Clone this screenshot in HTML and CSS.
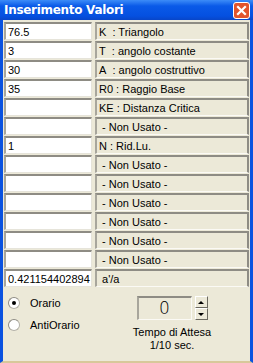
FILE: index.html
```html
<!DOCTYPE html>
<html lang="it">
<head>
  <meta charset="UTF-8" />
  <title>Inserimento Valori</title>
  <link rel="stylesheet" href="styles.css">
</head>
<body>
  <div class="window">
    <div class="titlebar">
      <span class="title">Inserimento Valori</span>
      <span class="close">
        <svg width="11" height="11" viewBox="0 0 11 11">
          <path d="M2 2 L9 9 M9 2 L2 9" stroke="#fff" stroke-width="2.2" stroke-linecap="square" />
        </svg>
      </span>
    </div>

    <div class="client">
      <div class="rows">
        <input class="val" value="76.5"><div class="lbl">K&nbsp; : Triangolo</div>
        <input class="val" value="3"><div class="lbl">T&nbsp; : angolo costante</div>
        <input class="val" value="30"><div class="lbl">A&nbsp; : angolo costruttivo</div>
        <input class="val" value="35"><div class="lbl">R0 : Raggio Base</div>
        <input class="val" value=""><div class="lbl">KE : Distanza Critica</div>
        <input class="val" value=""><div class="lbl">&nbsp;- Non Usato -</div>
        <input class="val" value="1"><div class="lbl">N : Rid.Lu.</div>
        <input class="val" value=""><div class="lbl">&nbsp;- Non Usato -</div>
        <input class="val" value=""><div class="lbl">&nbsp;- Non Usato -</div>
        <input class="val" value=""><div class="lbl">&nbsp;- Non Usato -</div>
        <input class="val" value=""><div class="lbl">&nbsp;- Non Usato -</div>
        <input class="val" value=""><div class="lbl">&nbsp;- Non Usato -</div>
        <input class="val" value=""><div class="lbl">&nbsp;- Non Usato -</div>
        <input class="val" value="0.421154402894"><div class="lbl">&nbsp;a'/a</div>
      </div>

      <div class="bottom">
        <div class="radios">
          <label class="radio"><span class="dot on"></span>Orario</label>
          <label class="radio"><span class="dot"></span>AntiOrario</label>
        </div>
        <div class="timer">
          <div class="spin">
            <div class="spin-val">0</div>
            <div class="spin-btns">
              <div class="sbtn"><span class="arr up"></span></div>
              <div class="sbtn"><span class="arr down"></span></div>
            </div>
          </div>
          <div class="caption">Tempo di Attesa<br>1/10 sec.</div>
        </div>
      </div>
    </div>
  </div>
</body>
</html>
```
FILE: styles.css
```css
body {
  margin: 0;
  font-family: "Liberation Sans", Arial, sans-serif;
  font-size: 11px;
  color: #000;
  background: #fff;
}

.window {
  width: 253px;
  height: 363px;
  box-sizing: border-box;
  background: #ece9d8;
  border-left: 3px solid #0a52e0;
  border-right: 3px solid #0a52e0;
  border-bottom: 2px solid #d8c89a;
  display: flex;
  flex-direction: column;
}

.titlebar {
  height: 20px;
  margin: 0 -3px;
  padding: 0 3px 0 4px;
  display: flex;
  align-items: center;
  justify-content: space-between;
  background: linear-gradient(#3c8cf8, #0a5ae8 30%, #0550e0 80%, #0846c8);
}

.title {
  color: #fff;
  font-weight: bold;
  font-size: 12px;
  font-family: "DejaVu Sans", sans-serif;
  letter-spacing: -0.3px;
}

.close {
  width: 15px;
  height: 15px;
  border: 1px solid #fff;
  border-radius: 3px;
  background: #e2542c;
  display: flex;
  align-items: center;
  justify-content: center;
}

.client {
  padding: 2px 0 0 1px;
  flex: 1;
  display: flex;
  flex-direction: column;
}

.rows {
  display: grid;
  grid-template-columns: 88px 154px;
  grid-auto-rows: 18px;
  column-gap: 3px;
  row-gap: 1px;
}

.val {
  box-sizing: border-box;
  width: 88px;
  height: 18px;
  margin: 0;
  padding: 1px 0 0 2px;
  font: 11px "Liberation Sans", Arial, sans-serif;
  background: #fff;
  border-top: 2px solid #8e8c84;
  border-left: 2px solid #a8a69c;
  border-right: 1px solid #e6e4da;
  border-bottom: 1px solid #e6e4da;
  outline: none;
}

.lbl {
  box-sizing: border-box;
  height: 18px;
  padding: 1px 0 0 2px;
  line-height: 14px;
  background: #ece9d8;
  border-top: 2px solid #8e8c84;
  border-left: 2px solid #a8a69c;
  border-right: 2px solid #8e8c84;
  border-bottom: 1px solid #fbfaf5;
  white-space: nowrap;
}

.bottom {
  display: flex;
  padding-top: 9px;
}

.radios {
  width: 124px;
  display: flex;
  flex-direction: column;
  gap: 9px;
  padding-left: 4px;
}

.radio {
  display: flex;
  align-items: center;
  height: 13px;
  font-size: 11px;
}

.dot {
  width: 12px;
  height: 12px;
  border-radius: 50%;
  background: #fff;
  border: 1px solid #b4b2a8;
  border-left-color: #8e8c84;
  border-top-color: #8e8c84;
  box-sizing: border-box;
  margin-right: 10px;
  display: flex;
  align-items: center;
  justify-content: center;
}

.dot.on::after {
  content: "";
  width: 4px;
  height: 4px;
  border-radius: 50%;
  background: #000;
}

.timer {
  display: flex;
  flex-direction: column;
  align-items: center;
  width: 80px;
}

.spin {
  display: flex;
  gap: 3px;
}

.spin-val {
  box-sizing: border-box;
  width: 55px;
  height: 24px;
  border-top: 2px solid #8e8c84;
  border-left: 2px solid #a8a69c;
  border-right: 1px solid #fbfaf5;
  border-bottom: 1px solid #fbfaf5;
  background: #ece9d8;
  text-align: center;
  font-size: 17px;
  line-height: 20px;
  font-family: "DejaVu Sans", sans-serif;
  font-weight: 200;
}

.spin-btns {
  display: flex;
  flex-direction: column;
}

.sbtn {
  box-sizing: border-box;
  width: 13px;
  height: 12px;
  background: #ece9d8;
  border-top: 1px solid #fff;
  border-left: 1px solid #fff;
  border-right: 1px solid #6c6a60;
  border-bottom: 1px solid #6c6a60;
  display: flex;
  align-items: center;
  justify-content: center;
}

.arr {
  width: 0;
  height: 0;
  border-left: 3px solid transparent;
  border-right: 3px solid transparent;
}

.arr.up {
  border-bottom: 3px solid #000;
}

.arr.down {
  border-top: 3px solid #000;
}

.caption {
  margin-top: 6px;
  text-align: center;
  line-height: 13px;
  white-space: nowrap;
}
```
